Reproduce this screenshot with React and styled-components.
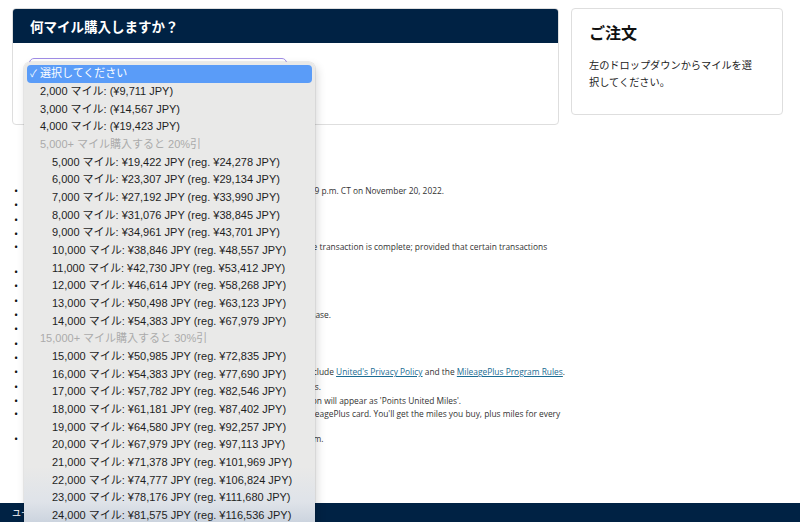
import React from "react"
import styled, { createGlobalStyle } from "styled-components"

const GlobalStyle = createGlobalStyle`
  html, body {
    margin: 0;
    padding: 0;
    overflow: hidden;
    background: #fff;
  }
  body {
    font-family: "Open Sans", "Noto Sans CJK JP", sans-serif;
    color: #333;
  }
`

const NAVY = "#002244"

const Page = styled.div`
  position: relative;
  height: 522px;
  display: flex;
  flex-direction: column;
`

const Top = styled.div`
  display: flex;
  align-items: flex-start;
  gap: 12px;
  padding: 8px 17px 0 12px;
`

const MainCard = styled.section`
  width: 547px;
  border: 1px solid #dedede;
  border-radius: 4px;
  overflow: hidden;
  box-sizing: border-box;
`

const CardHeader = styled.h2`
  margin: 0;
  height: 34px;
  background: ${NAVY};
  color: #fff;
  display: flex;
  align-items: center;
  padding: 0 17px;
  font-family: "Noto Sans CJK JP", sans-serif;
  font-size: 13.5px;
  font-weight: 700;
`

const CardBody = styled.div`
  height: 81px;
  padding: 15px 16px;
  box-sizing: border-box;
`

const Select = styled.div`
  width: 258px;
  height: 30px;
  border: 1.5px solid #a08de6;
  border-radius: 5px;
  box-sizing: border-box;
`

const SideCard = styled.aside`
  width: 212px;
  height: 107px;
  border: 1px solid #dedede;
  border-radius: 4px;
  padding: 11px 17px;
  box-sizing: border-box;
`

const SideTitle = styled.h3`
  margin: 0 0 12px;
  font-family: "Noto Sans CJK JP", sans-serif;
  font-size: 16px;
  font-weight: 700;
  color: #111;
  line-height: 24px;
`

const SideText = styled.p`
  margin: 0;
  max-width: 168px;
  font-family: "Noto Sans CJK JP", sans-serif;
  font-size: 10.2px;
  line-height: 17px;
  color: #222;
`

const Terms = styled.ul`
  list-style: none;
  margin: 59px 0 0;
  padding: 0 0 0 14px;
  font-size: 8.4px;
  color: #333;
`

const Item = styled.li`
  display: flex;
  white-space: nowrap;
  line-height: ${(p) => (p.$two ? "12px" : "14.3px")};
  &::before {
    content: "•";
    width: 16px;
    flex: none;
    font-size: 11px;
    color: #111;
  }
`

const Lines = styled.span`
  display: flex;
  flex-direction: column;
`

const Link = styled.a`
  color: #1b6c93;
  text-decoration: underline;
`

const Footer = styled.footer`
  margin-top: auto;
  height: 19px;
  background: ${NAVY};
  color: #fff;
  font-family: "Noto Sans CJK JP", sans-serif;
  font-size: 9px;
  display: flex;
  align-items: center;
  padding-left: 12px;
`

const Menu = styled.div`
  position: absolute;
  top: 62px;
  left: 24px;
  width: 291px;
  height: 470px;
  padding: 3px;
  box-sizing: border-box;
  background: linear-gradient(
    #e9e9e8 0,
    #e9e9e8 405px,
    #dfe3e9 440px,
    #ccd4df 460px,
    #c8d0dc 470px
  );
  border-radius: 6px;
  box-shadow: 0 0 0 0.5px rgba(0, 0, 0, 0.12), 2px 4px 10px rgba(0, 0, 0, 0.16);
  font-family: "Liberation Sans", "Noto Sans CJK JP", sans-serif;
  font-size: 11px;
  line-height: 1;
  color: #1e1e1e;
  overflow: hidden;
`

const Option = styled.div`
  height: 17.68px;
  display: flex;
  align-items: center;
  white-space: nowrap;
  border-radius: 4px;
  padding-left: ${(p) => (p.$nested ? 25 : 13)}px;
  background: ${(p) => (p.$selected ? "#5a9cf8" : "transparent")};
  color: ${(p) => (p.$selected ? "#fff" : p.$group ? "#ababab" : "#1e1e1e")};
`

const Check = styled.span`
  flex: 0 0 10px;
  min-width: 0;
  margin-left: -10px;
  font-size: 10px;
`

const rows = [
  ["5,000", "19,422", "24,278"],
  ["6,000", "23,307", "29,134"],
  ["7,000", "27,192", "33,990"],
  ["8,000", "31,076", "38,845"],
  ["9,000", "34,961", "43,701"],
  ["10,000", "38,846", "48,557"],
  ["11,000", "42,730", "53,412"],
  ["12,000", "46,614", "58,268"],
  ["13,000", "50,498", "63,123"],
  ["14,000", "54,383", "67,979"],
]

const rows30 = [
  ["15,000", "50,985", "72,835"],
  ["16,000", "54,383", "77,690"],
  ["17,000", "57,782", "82,546"],
  ["18,000", "61,181", "87,402"],
  ["19,000", "64,580", "92,257"],
  ["20,000", "67,979", "97,113"],
  ["21,000", "71,378", "101,969"],
  ["22,000", "74,777", "106,824"],
  ["23,000", "78,176", "111,680"],
  ["24,000", "81,575", "116,536"],
  ["25,000", "84,974", "121,392"],
]

function Discounted({ miles, price, reg }) {
  return (
    <Option $nested>
      {miles} マイル: ¥{price} JPY (reg. ¥{reg} JPY)
    </Option>
  )
}

export default function App() {
  return (
    <>
      <GlobalStyle />
      <Page>
        <Top>
          <MainCard>
            <CardHeader>何マイル購入しますか？</CardHeader>
            <CardBody>
              <Select />
            </CardBody>
          </MainCard>
          <SideCard>
            <SideTitle>ご注文</SideTitle>
            <SideText>左のドロップダウンからマイルを選択してください。</SideText>
          </SideCard>
        </Top>

        <Terms>
          <Item>Bonus mile offer is valid for purchases made on united.com through 11:59 p.m. CT on November 20, 2022.</Item>
          <Item>Miles purchased are non-refundable.</Item>
          <Item>Purchased miles do not count toward Premier status.</Item>
          <Item>Maximum purchase is 200,000 miles per calendar year.</Item>
          <Item $two>
            <Lines>
              <span>Miles will be posted to your MileagePlus account within 72 hours after the transaction is complete; provided that certain transactions</span>
              <span>may take up to 7 business days to post.</span>
            </Lines>
          </Item>
          <Item>The purchase of miles is subject to these terms.</Item>
          <Item>Miles cannot be transferred once purchased.</Item>
          <Item>All prices are shown in Japanese yen.</Item>
          <Item>You may buy miles for your own account or for a member with this purchase.</Item>
          <Item>Taxes may apply.</Item>
          <Item>Offer subject to change.</Item>
          <Item>Not combinable with other offers.</Item>
          <Item>
            <span>
              By completing your purchase, you agree to the terms of service, which include{" "}
              <Link href="#">United's Privacy Policy</Link> and the{" "}
              <Link href="#">MileagePlus Program Rules</Link>.
            </span>
          </Item>
          <Item>Additional restrictions and fees may apply to certain MileagePlus products.</Item>
          <Item>On your credit card statement, the charge for your MileagePlus transaction will appear as 'Points United Miles'.</Item>
          <Item $two>
            <Lines>
              <span>Earn even more miles when you pay for your purchases with a United MileagePlus card. You'll get the miles you buy, plus miles for every</span>
              <span>dollar you spend.</span>
            </Lines>
          </Item>
          <Item>For more information about buying or gifting miles, please visit united.com.</Item>
        </Terms>

        <Footer>ユーザー規約</Footer>

        <Menu>
          <Option $selected>
            <Check>✓</Check>選択してください
          </Option>
          <Option>2,000 マイル: (¥9,711 JPY)</Option>
          <Option>3,000 マイル: (¥14,567 JPY)</Option>
          <Option>4,000 マイル: (¥19,423 JPY)</Option>
          <Option $group>5,000+ マイル購入すると 20%引</Option>
          {rows.map(([m, p, r]) => (
            <Discounted key={m} miles={m} price={p} reg={r} />
          ))}
          <Option $group>15,000+ マイル購入すると 30%引</Option>
          {rows30.map(([m, p, r]) => (
            <Discounted key={m} miles={m} price={p} reg={r} />
          ))}
        </Menu>
      </Page>
    </>
  )
}
